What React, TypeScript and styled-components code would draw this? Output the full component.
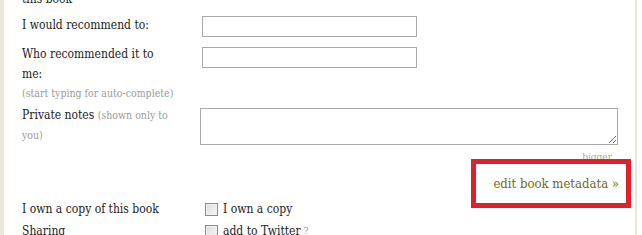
import React from "react";
import styled, { createGlobalStyle } from "styled-components";

const Global = createGlobalStyle`
  html, body { margin: 0; padding: 0; background: #fff; overflow: hidden; }
  body { font-family: "DejaVu Serif Condensed", "DejaVu Serif", Georgia, serif; font-stretch: condensed; color: #222; }
`;

const Frame = styled.div`
  width: 637px;
  height: 235px;
  box-sizing: border-box;
  border-left: 4px solid #e9e7da;
  border-right: 2px solid #e9e7da;
  overflow: hidden;
`;

const Scroller = styled.div`
  margin-top: -11px;
  padding-left: 18px;
`;

const Row = styled.div<{ $gap?: number }>`
  display: grid;
  grid-template-columns: 178px 1fr;
  align-items: start;
  margin-top: ${(p) => p.$gap ?? 0}px;
`;

const Label = styled.div`
  font-size: 12px;
  line-height: 20px;
  color: #222;
  max-width: 152px;
`;

const Hint = styled.span<{ $block?: boolean }>`
  display: ${(p) => (p.$block ? "block" : "inline")};
  font-size: 10.5px;
  line-height: ${(p) => (p.$block ? "18px" : "20px")};
  color: #9a9a9a;
  white-space: ${(p) => (p.$block ? "nowrap" : "normal")};
`;

const TextInput = styled.input<{ $offset: number }>`
  box-sizing: border-box;
  width: 215px;
  height: 21px;
  margin: ${(p) => p.$offset}px 0 0 2px;
  border: 1px solid #aaa;
  padding: 0 3px;
  background: #fff;
`;

const Notes = styled.textarea`
  box-sizing: border-box;
  width: 418px;
  height: 37px;
  margin: 3px 0 0 0;
  border: 1px solid #aaa;
  padding: 2px;
  background: #fff;
  display: block;
`;

const LinkArea = styled.div`
  display: flex;
  flex-direction: column;
  align-items: flex-end;
  padding-right: 16px;
`;

const Bigger = styled.a`
  font-size: 10px;
  line-height: 14px;
  color: #a8a8a8;
  margin-right: 7px;
  margin-top: 5px;
  text-decoration: none;
`;

const EditWrap = styled.div`
  position: relative;
  margin-top: 9px;
`;

const EditLink = styled.a`
  font-size: 13px;
  line-height: 20px;
  color: #6e6a24;
  text-decoration: none;
  white-space: nowrap;
`;

const Highlight = styled.div`
  position: absolute;
  left: -22px;
  right: -12px;
  top: -14px;
  height: 49px;
  box-sizing: border-box;
  border: 5px solid #e2202a;
  pointer-events: none;
`;

const CheckLine = styled.label`
  display: flex;
  align-items: center;
  gap: 5px;
  font-size: 12px;
  line-height: 20px;
  color: #222;
  margin-left: 5px;
`;

const Box = styled.span`
  width: 11px;
  height: 11px;
  border: 1px solid #8a8a8a;
  background: linear-gradient(135deg, #dcdcdc, #f7f7f7);
  box-shadow: inset 0 0 0 1px #f2f2f2;
  flex: none;
`;

const Help = styled.span`
  font-size: 10px;
  color: #999;
  margin-left: 3px;
  vertical-align: top;
`;

export default function App() {
  return (
    <>
      <Global />
      <Frame>
        <Scroller>
          <Label>this book</Label>
          <Row $gap={6}>
            <Label>I would recommend to:</Label>
            <TextInput $offset={1} />
          </Row>
          <Row $gap={7}>
            <div>
              <Label>Who recommended it to me:</Label>
              <Hint $block>(start typing for auto-complete)</Hint>
            </div>
            <TextInput $offset={3} />
          </Row>
          <Row $gap={3}>
            <Label>
              Private notes <Hint>(shown only to you)</Hint>
            </Label>
            <Notes />
          </Row>
          <LinkArea>
            <Bigger href="#">bigger</Bigger>
            <EditWrap>
              <EditLink href="#">edit book metadata »</EditLink>
              <Highlight />
            </EditWrap>
          </LinkArea>
          <Row $gap={5}>
            <Label>I own a copy of this book</Label>
            <CheckLine>
              <Box />
              <span>I own a copy</span>
            </CheckLine>
          </Row>
          <Row $gap={2}>
            <Label>Sharing</Label>
            <CheckLine>
              <Box />
              <span>
                add to Twitter<Help>?</Help>
              </span>
            </CheckLine>
          </Row>
        </Scroller>
      </Frame>
    </>
  );
}
